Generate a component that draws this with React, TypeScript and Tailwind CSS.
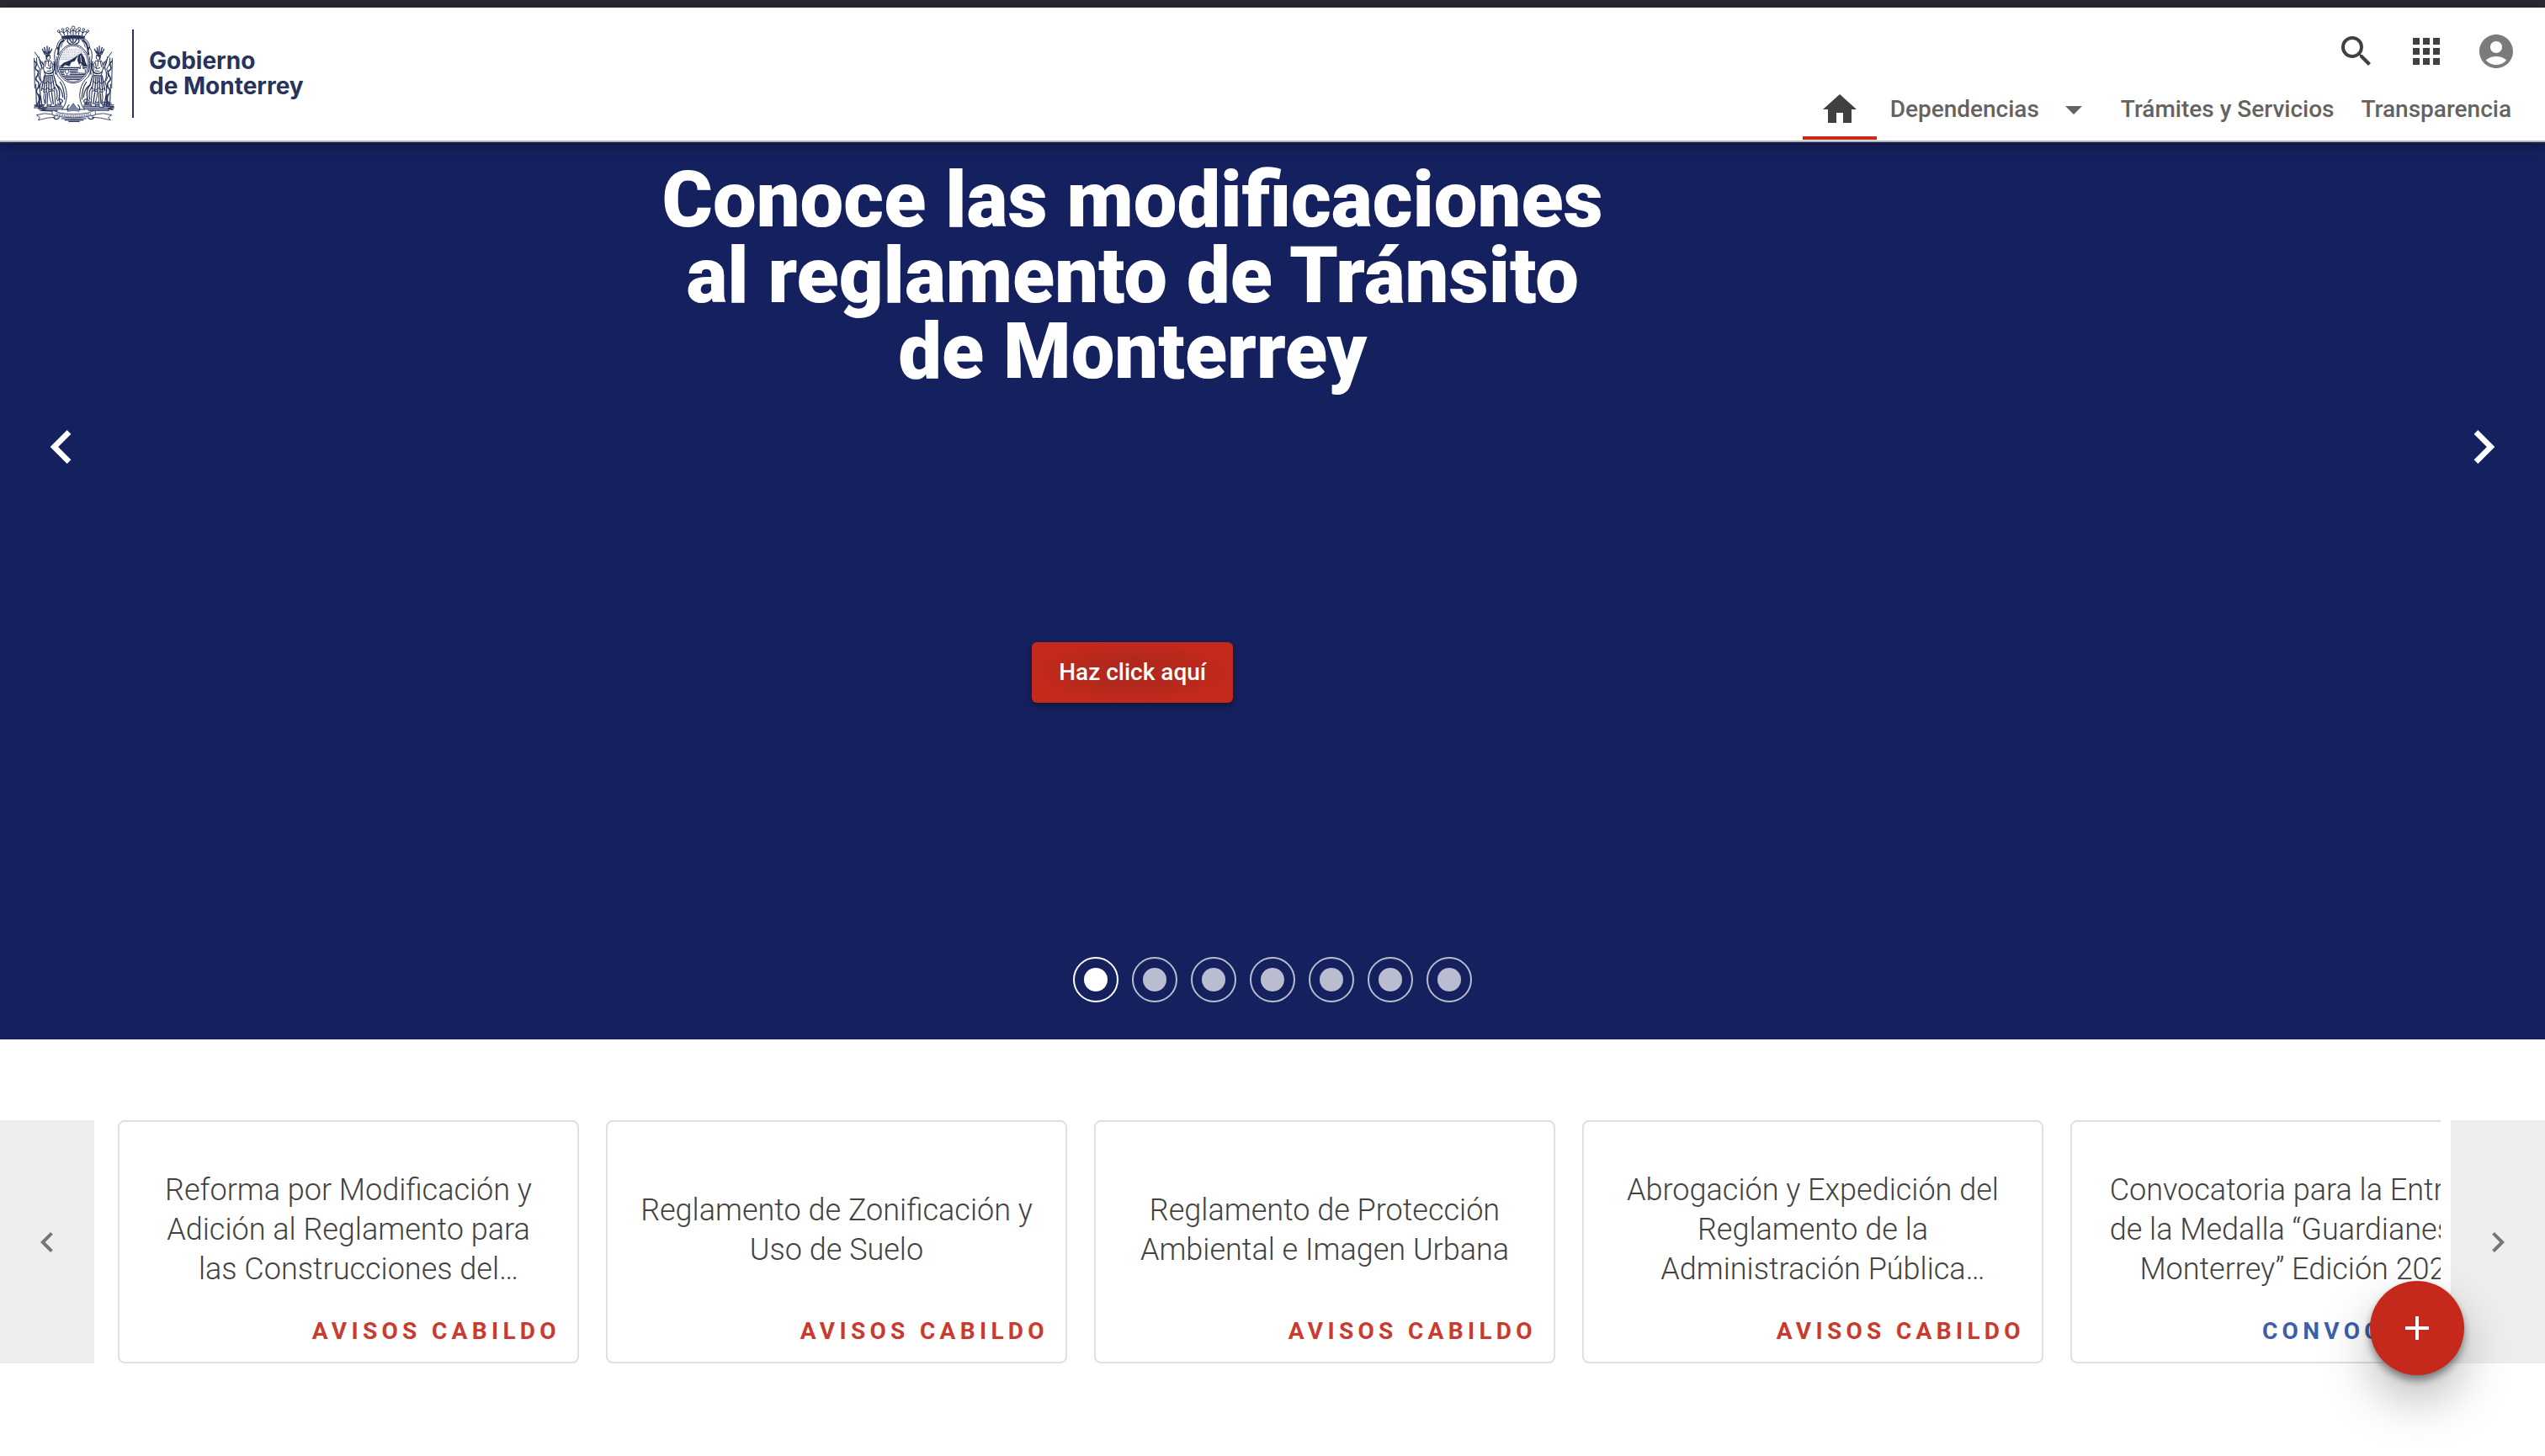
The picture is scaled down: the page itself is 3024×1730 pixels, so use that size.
import React from 'react';
import {
  MdAccountCircle,
  MdAdd,
  MdApps,
  MdArrowDropDown,
  MdChevronLeft,
  MdChevronRight,
  MdHome,
  MdSearch,
} from 'react-icons/md';

type Notice = { lines: string[]; category: string; tone: 'red' | 'blue' };

const notices: Notice[] = [
  {
    lines: ['Reforma por Modificación y', 'Adición al Reglamento para', 'las Construcciones del…'],
    category: 'AVISOS CABILDO',
    tone: 'red',
  },
  { lines: ['Reglamento de Zonificación y', 'Uso de Suelo'], category: 'AVISOS CABILDO', tone: 'red' },
  { lines: ['Reglamento de Protección', 'Ambiental e Imagen Urbana'], category: 'AVISOS CABILDO', tone: 'red' },
  {
    lines: ['Abrogación y Expedición del', 'Reglamento de la', 'Administración Pública…'],
    category: 'AVISOS CABILDO',
    tone: 'red',
  },
  {
    lines: ['Convocatoria para la Entrega', 'de la Medalla “Guardianes de', 'Monterrey” Edición 2023…'],
    category: 'CONVOCATORIAS',
    tone: 'blue',
  },
];

/* One supporter of the coat of arms: figure, feather headdress and draped flags. */
function Supporter() {
  return (
    <g fill="none" stroke="#27335a" strokeWidth="3" strokeLinecap="round">
      {/* feathers */}
      <path d="M52 116 L43 97 M56 114 L50 91 M60 113 L60 87 M64 113 L68 92 M68 114 L77 97 M50 106 L57 112 M72 104 L64 112" strokeWidth="4" />
      {/* head */}
      <path d="M57 118 Q68 114 71 122 Q73 133 65 136 Q56 134 57 118Z" fill="#fff" />
      <path d="M57 118 Q62 114 70 119 L60 124 L58 134 Z" fill="#27335a" />
      {/* flags */}
      <path d="M16 108 L62 176 M14 130 L16 236 M22 128 L24 150 L34 168 L26 186 L36 210 M30 124 L36 150 L44 166" />
      <path d="M14 140 Q26 146 20 158 Q14 168 26 174 Q34 184 22 196 Q16 206 28 214 Q36 226 24 240 Q18 250 30 262 Q36 276 24 296" strokeWidth="4.6" />
      <path d="M34 140 Q44 158 38 172 M42 142 L52 168 M36 176 Q32 196 40 214 Q30 234 36 256 M20 222 L22 292 M30 224 Q40 250 32 292" strokeWidth="3.4" />
      {/* torso and arms */}
      <path d="M52 140 Q42 158 50 178 L54 192 L82 190 L80 164 Q84 150 74 140 Z" fill="#fff" />
      <path d="M56 142 L52 160 M64 140 L66 158 M74 146 L70 168 M58 164 Q66 170 76 162 M60 176 L74 174" />
      <path d="M50 178 Q62 190 80 180 Q90 170 84 150 M84 142 Q94 158 90 186" strokeWidth="4.4" />
      {/* skirt */}
      <path d="M50 192 L40 244 M54 192 L48 250 M60 194 L57 252 M66 194 L66 250 M72 194 L76 246 M78 192 L86 240 M84 192 L94 228" strokeWidth="3.8" />
      <path d="M42 212 L52 220 L62 212 L72 220 L84 210 M40 236 L52 242 L62 236 L76 244 L88 232" />
      {/* legs */}
      <path d="M50 250 Q44 272 52 292 L44 304 L60 304 L62 254 Z" fill="#fff" />
      <path d="M66 250 Q68 274 76 292 L72 302 L90 300 L86 246 Z" fill="#fff" />
      <path d="M56 256 L54 290 M76 252 L82 292 M36 262 L42 298 M30 258 L34 298 M92 222 Q106 240 104 262 Q100 276 108 292" strokeWidth="4" />
      <path d="M88 234 Q100 250 94 276 M98 228 Q114 242 116 268 M96 282 Q106 268 116 282 Q108 296 98 290" strokeWidth="3.6" />
    </g>
  );
}

function CoatOfArms() {
  return (
    <svg viewBox="0 0 312 372" className="h-31 w-26 shrink-0" role="img" aria-label="Escudo de Monterrey">
      {/* ground */}
      <g stroke="#27335a" strokeWidth="3.2">
        <path d="M14 296 H112 M20 301 H116 M12 306 H118 M28 311 H120 M34 316 H98 M196 286 H284 M192 291 H290 M190 296 H298 M188 301 H284 M186 306 H300 M190 311 H296 M206 316 H282" />
        <path d="M14 300 L40 300 L30 306 L58 310 L40 316 L96 318 M270 300 L298 302 L276 310 L296 312" strokeWidth="4" fill="none" />
      </g>
      <Supporter />
      <g transform="translate(306 0) scale(-1 1)">
        <Supporter />
      </g>
      {/* cartouche */}
      <path
        d="M114 60 Q98 66 94 92 Q80 112 90 146 Q86 190 110 206 Q128 226 130 262 Q128 296 112 312 L194 312 Q178 296 176 262 Q178 226 196 206 Q220 190 216 146 Q226 112 212 92 Q208 66 192 60 Z"
        fill="#fff"
        stroke="#27335a"
        strokeWidth="3"
      />
      <g fill="none" stroke="#27335a" strokeWidth="2.6" strokeLinecap="round">
        <path d="M118 66 Q102 74 102 96 M188 66 Q204 74 204 96 M96 92 Q104 100 98 116 M210 92 Q202 100 208 116" strokeWidth="6" />
        <path d="M124 64 Q112 74 110 90 M182 64 Q194 74 196 90 M94 124 Q92 160 98 180 M212 124 Q214 160 208 180" />
        <path d="M106 214 Q122 236 122 276 M200 214 Q184 236 184 276 M138 296 Q128 306 134 316 M170 296 Q180 306 174 316" strokeWidth="3.4" />
        <path d="M134 60 Q128 74 142 78 Q152 88 164 78 Q178 74 172 60 M140 62 L148 74 M152 60 L153 80 M166 62 L158 74" strokeWidth="4" />
      </g>
      {/* crown */}
      <g fill="none" stroke="#27335a" strokeWidth="3">
        <path d="M112 52 Q153 44 194 52 L191 60 Q153 54 115 60 Z" fill="#27335a" />
        <path d="M112 50 L100 32 M122 48 L116 28 M134 47 L130 24 M144 46 L143 24 M153 46 V24 M162 46 L163 24 M172 47 L176 24 M184 48 L190 28 M194 50 L206 32" />
        <path d="M102 38 Q112 30 120 40 Q128 24 140 38 Q153 24 166 38 Q178 24 186 40 Q194 30 204 38" />
      </g>
      <g fill="#fff" stroke="#27335a" strokeWidth="2.6">
        <circle cx="101" cy="33" r="4" />
        <circle cx="116" cy="27" r="4" />
        <circle cx="132" cy="25" r="5" />
        <circle cx="153" cy="21" r="6" />
        <circle cx="174" cy="25" r="5" />
        <circle cx="190" cy="27" r="4" />
        <circle cx="205" cy="33" r="4" />
      </g>
      {/* oval scene */}
      <ellipse cx="153" cy="149" rx="57" ry="69" fill="#fff" stroke="#27335a" strokeWidth="3" />
      <ellipse cx="153" cy="149" rx="52" ry="64" fill="#fff" stroke="#27335a" strokeWidth="2.4" />
      <g stroke="#7a84a3" strokeWidth="2.4" fill="none">
        <path d="M128 98 H178 M120 104 H186 M115 110 H191 M111 116 H195 M108 122 H168 M106 128 H160 M106 134 H148" strokeDasharray="3 2" />
        <path d="M153 122 V90 M145 122 L136 94 M161 118 L170 94 M138 124 L120 104" stroke="#fff" strokeWidth="3" />
      </g>
      <path d="M104 160 L118 146 L144 136 L172 118 L158 140 L146 144 L140 158 L124 154 L116 161 Z" fill="#27335a" />
      <path d="M170 120 L181 111 L192 126 L197 144 L205 160 L186 158 L180 146 L174 154 L168 138 Z" fill="#27335a" />
      <path d="M179 120 L182 144" stroke="#fff" strokeWidth="2.4" />
      <g stroke="#27335a" strokeWidth="3.6" fill="none">
        <path d="M104 163 H202 M104 169 H168 M106 175 H122 M140 175 H166 M108 181 H120 M142 181 H166 M110 187 H122 M140 187 H196 M114 193 H192 M120 199 H186 M128 205 H178" />
      </g>
      <g stroke="#27335a" strokeWidth="2.4" fill="#fff">
        <circle cx="131" cy="177" r="7" />
        <path d="M131 184 V194 M168 182 V168 L174 162 L178 168 V156 L184 152 L188 158 V166 L196 168 V184 Z" />
      </g>
      {/* base */}
      <path d="M153 290 L176 322 Q153 314 130 322 Z" fill="#7a84a3" />
      <path d="M153 290 Q162 308 178 314 M153 290 Q144 308 128 314" stroke="#27335a" strokeWidth="2" fill="none" />
      {/* ribbon */}
      <g fill="#fff" stroke="#27335a" strokeWidth="2.6">
        <path d="M22 332 Q50 322 82 330 L88 340 Q64 340 28 350 L34 341 Z" />
        <path d="M290 332 Q262 322 228 330 L220 340 Q248 340 286 350 L278 341 Z" />
        <path d="M82 316 Q92 318 102 324 Q153 334 208 324 Q218 318 228 316 Q236 320 230 332 Q153 352 80 332 Q74 320 82 316 Z" />
        <path d="M82 340 Q92 354 104 340 M228 340 Q218 354 204 340 M110 345 H200 M122 350 H190 M136 355 H176" fill="none" strokeWidth="3.6" />
      </g>
      <path d="M92 329 Q153 344 218 329" fill="none" stroke="#27335a" strokeWidth="8" strokeDasharray="2.4 3.2" opacity="0.8" />
    </svg>
  );
}

function Header() {
  return (
    <header className="relative z-10 flex justify-between border-b-2 border-[#b3b0b3] bg-white shadow-[0_4px_16px_rgba(0,0,0,0.35)]">
      <a href="#inicio" className="flex items-start pt-[17px] pl-9 text-[#27335a]">
        <CoatOfArms />
        <span className="mt-[9px] ml-[17px] h-[105px] w-0.5 bg-[#27335a]" />
        <span className="mt-[31px] ml-[18px] font-['Inter',sans-serif] text-[28px] leading-[30px] font-bold">
          Gobierno
          <br />
          de Monterrey
        </span>
      </a>
      <div className="flex flex-col items-end pt-7">
        <div className="flex gap-[35px] pr-[34px] text-[#404040]">
          <button type="button" aria-label="Buscar">
            <MdSearch className="size-12" />
          </button>
          <button type="button" aria-label="Aplicaciones">
            <MdApps className="size-12" />
          </button>
          <button type="button" aria-label="Cuenta" className="text-[#7b7b7b]">
            <MdAccountCircle className="size-12" />
          </button>
        </div>
        <nav className="mt-2 flex h-[74px] items-center pr-10 text-[28px] font-medium text-[#636363]">
          <a href="#inicio" aria-label="Inicio" className="relative mr-4 flex h-full w-22 items-center justify-center text-[#404040]">
            <MdHome className="size-12" />
            <span className="absolute inset-x-0 bottom-px h-1 bg-[#c4291c]" />
          </a>
          <button type="button" className="mr-8 flex items-center gap-[17px]">
            Dependencias
            <MdArrowDropDown className="size-12" />
          </button>
          <a href="#tramites" className="mr-8">
            Trámites y Servicios
          </a>
          <a href="#transparencia">Transparencia</a>
        </nav>
      </div>
    </header>
  );
}

function Hero() {
  return (
    <section className="relative bg-[#15215f] pt-6 pb-11 text-white">
      <div className="flex flex-col items-center pr-[11%]">
        <h1 className="text-center text-[92px] leading-[90px] font-black">
          Conoce las modificaciones
          <br />
          al reglamento de Tránsito
          <br />
          de Monterrey
        </h1>
        <button
          type="button"
          className="mt-[300px] h-18 rounded-md bg-[#c4291c] bg-[radial-gradient(closest-side,#b3281d_45%,#c4291c)] px-8 text-[28px] font-medium shadow-[0_3px_8px_rgba(0,0,0,0.4)]"
        >
          Haz click aquí
        </button>
      </div>
      <div className="mt-[302px] flex justify-center gap-4">
        {Array.from({ length: 7 }, (_, i) => (
          <button
            key={i}
            type="button"
            aria-label={`Diapositiva ${i + 1}`}
            className={
              i === 0
                ? 'flex size-[54px] items-center justify-center rounded-full border-2 border-white'
                : 'flex size-[54px] items-center justify-center rounded-full border-2 border-white opacity-70'
            }
          >
            <span className="size-7 rounded-full bg-white" />
          </button>
        ))}
      </div>
      <button type="button" aria-label="Anterior" className="absolute top-[322px] left-[33px]">
        <MdChevronLeft className="size-20" />
      </button>
      <button type="button" aria-label="Siguiente" className="absolute top-[322px] right-[33px]">
        <MdChevronRight className="size-20" />
      </button>
    </section>
  );
}

function NoticeCard({ notice }: { notice: Notice }) {
  return (
    <article className="flex w-[548px] shrink-0 flex-col rounded-lg border-2 border-[#e0e0e0] bg-white pt-[58px] pb-4">
      <h2 className="flex min-h-[141px] flex-1 flex-col justify-center text-center text-[36px] leading-[47px] font-light whitespace-nowrap text-[#424242]">
        {notice.lines.map((line) => (
          <span key={line} className={line.endsWith('…') ? 'pl-6' : ''}>
            {line}
          </span>
        ))}
      </h2>
      <p
        className={
          notice.tone === 'red'
            ? 'mt-[30px] pr-5 text-right text-[28px] leading-10 font-bold tracking-[0.19em] text-[#c93a2f]'
            : 'mt-[30px] pr-5 text-right text-[28px] leading-10 font-bold tracking-[0.19em] text-[#3b5fab]'
        }
      >
        {notice.category}
      </p>
    </article>
  );
}

function Notices() {
  return (
    <section className="flex py-24" aria-label="Avisos">
      <button type="button" aria-label="Avisos anteriores" className="flex w-28 shrink-0 items-center justify-center bg-[#eeeeee] text-[#757575]">
        <MdChevronLeft className="size-12" />
      </button>
      <div className="mr-3 flex min-w-0 flex-1 gap-8 overflow-hidden pl-7">
        {notices.map((notice) => (
          <NoticeCard key={notice.lines[0]} notice={notice} />
        ))}
      </div>
      <button type="button" aria-label="Avisos siguientes" className="flex w-28 shrink-0 items-center justify-center bg-[#eeeeee] text-[#757575]">
        <MdChevronRight className="size-12" />
      </button>
    </section>
  );
}

export default function App() {
  return (
    <div className="bg-white font-['Roboto',sans-serif]">
      <div className="h-[9px] bg-[#2b2a33]" />
      <Header />
      <main>
        <Hero />
        <Notices />
      </main>
      <button
        type="button"
        aria-label="Más opciones"
        className="fixed right-24 bottom-24 flex size-28 items-center justify-center rounded-full bg-[#c4291c] text-white shadow-[0_6px_10px_rgba(0,0,0,0.4),0_28px_60px_rgba(0,0,0,0.28)]"
      >
        <MdAdd className="size-12" />
      </button>
    </div>
  );
}
